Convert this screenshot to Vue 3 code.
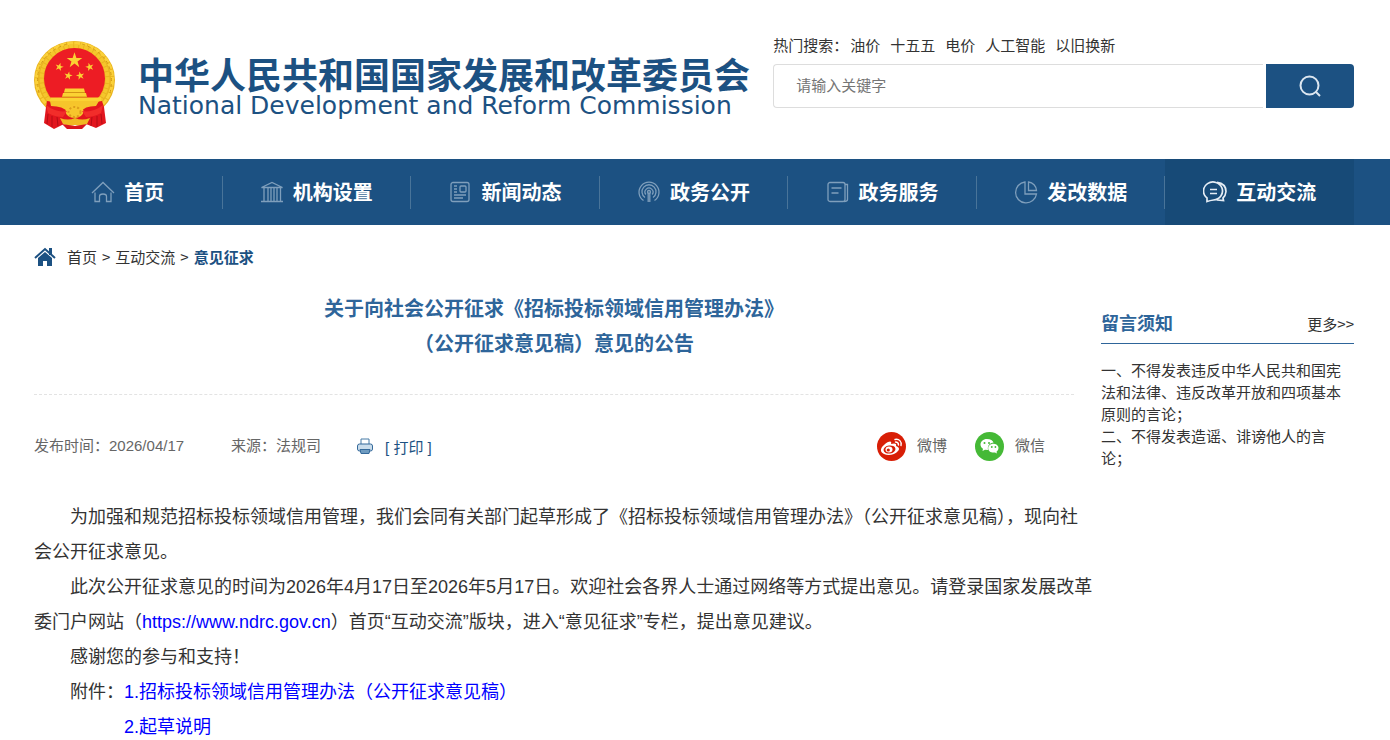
<script setup>
const hotWords = ['油价', '十五五', '电价', '人工智能', '以旧换新']
const navItems = [
  { label: '首页', icon: 'home' },
  { label: '机构设置', icon: 'bank' },
  { label: '新闻动态', icon: 'news' },
  { label: '政务公开', icon: 'signal' },
  { label: '政务服务', icon: 'book' },
  { label: '发改数据', icon: 'pie' },
  { label: '互动交流', icon: 'chat', active: true }
]
const star = 'M0-10 2.3-3.1 9.5-3.1 3.7 1.2 5.9 8.1 0 3.8-5.9 8.1-3.7 1.2-9.5-3.1-2.3-3.1Z'
</script>

<template>
  <div class="page" lang="zh-CN">
    <header class="header wrap">
      <a class="brand" href="#">
        <svg class="emblem" viewBox="0 0 82 89" aria-hidden="true">
          <ellipse cx="40.5" cy="39" rx="40.5" ry="39" fill="#e9b41f" />
          <ellipse cx="40.5" cy="38.5" rx="38" ry="36.5" fill="none" stroke="#fbd13a" stroke-width="3" stroke-dasharray="6 1" />
          <ellipse cx="40.5" cy="38" rx="33" ry="33" fill="none" stroke="#f5c62c" stroke-width="4" stroke-dasharray="4 1" />
          <path d="M5 52Q-3 15 33 3M76 52Q84 15 48 3" fill="none" stroke="#d29a18" stroke-width="1" stroke-dasharray="3 3" />
          <circle cx="40.5" cy="37.5" r="30.500" fill="#ed1c24" />
          <g fill="#fbd233">
            <path :d="star" transform="translate(40.5 19.5) scale(.82)" />
            <path :d="star" transform="translate(25.3 26) rotate(15) scale(.44)" />
            <path :d="star" transform="translate(55.7 26) rotate(-15) scale(.44)" />
            <path :d="star" transform="translate(34.3 34.7) rotate(12) scale(.44)" />
            <path :d="star" transform="translate(46.3 34.7) rotate(-12) scale(.44)" />
            <path d="M31 47.500h19l1 4H30zM29 52h23l1 4H28zM17 56.500h50v6H14z" />
          </g>
          <path d="M30 51.500h21M28 56h25" stroke="#d39515" stroke-width="1" />
          <path d="M13 60 26 62H55L68 60 70 66 72 82 62 87 52 83H30L20 88 10 82 12 66Z" fill="#e2161e" />
          <path d="M16 60h49l-3 5q-12 0-15 6l-6 2-7-2q-5-6-17-6z" fill="#f6c52b" />
          <ellipse cx="40.500" cy="70" rx="9" ry="7" fill="#f7c62c" />
          <ellipse cx="40.500" cy="71" rx="6" ry="5" fill="none" stroke="#dd9c1b" stroke-width="2" stroke-dasharray="2 2" />
          <path d="M26 77q8 3 15 0 7 3 15 0l-3 6q-6 3-12 1-6 2-12-1z" fill="#f0b923" />
          <path d="M12 64q10 8 21 6l-4 6q-8 0-15-4M69 64q-10 8-21 6l4 6q8 0 15-4" fill="#f22d2a" />
          <path d="M14 73l-1 10M18 75l0 11M23 76l1 9M67 73l1 10M63 75l0 11M58 76l-1 9" stroke="#b40d15" stroke-width="1" />
          <path d="M28 83l5 5h15l5-5-12 2z" fill="#d8151d" />
        </svg>
        <span class="brand-text">
          <strong>中华人民共和国国家发展和改革委员会</strong>
          <span>National Development and Reform Commission</span>
        </span>
      </a>
      <form class="search" @submit.prevent>
        <div class="hot">
          <span>热门搜索：</span>
          <a v-for="word in hotWords" :key="word" href="#">{{ word }}</a>
        </div>
        <div class="search-row">
          <input type="text" placeholder="请输入关键字" aria-label="请输入关键字">
          <button type="submit" aria-label="搜索">
            <svg width="22" height="22" viewBox="0 0 22 22" fill="none" stroke="#dce6f0" stroke-width="2">
              <circle cx="10.500" cy="10.500" r="9" />
              <path d="M16.500 16.500 21 21" />
            </svg>
          </button>
        </div>
      </form>
    </header>

    <nav class="nav">
      <ul class="wrap">
        <li v-for="item in navItems" :key="item.icon" :class="{ active: item.active }">
          <a href="#">
            <svg class="nav-icon" viewBox="0 0 24 24" fill="none" stroke="currentColor" stroke-width="1.300" aria-hidden="true">
              <template v-if="item.icon === 'home'">
                <path d="M1 13 12 2.500 23 13M4 12.500V21.500H8.500V16.500Q8.500 14 12 14T15.500 16.500V21.500H20V12.500" />
              </template>
              <template v-else-if="item.icon === 'bank'">
                <path d="M1.500 7.500 12 2.500 22.500 7.500ZM1 21.500H23M4 8V21M8 8V21M11 8V21M14 8V21M17 8V21M20.500 8V21" />
              </template>
              <template v-else-if="item.icon === 'news'">
                <rect x="3" y="2.500" width="18" height="19" rx="2" />
                <rect x="12" y="6" width="6" height="6" rx="1" />
                <path d="M6 6H9M6 9H9M6 12H9M6 15H18M6 18H15" />
              </template>
              <template v-else-if="item.icon === 'signal'">
                <path d="M11.200 12.500V22M12.800 12.500V22M6.500 20.500A10 10 0 1 1 17.500 20.500M8 17.500A7 7 0 1 1 16 17.500M8.800 14.500A4 4 0 1 1 15.200 14.500" />
                <circle cx="12" cy="12" r="1.500" />
              </template>
              <template v-else-if="item.icon === 'book'">
                <rect x="2" y="2.500" width="17" height="19" rx="2" />
                <path d="M5.500 8H15.500M5.500 13H12.500M19 4.500H21.500V19.500Q21.500 21.500 18 21.500" />
              </template>
              <template v-else-if="item.icon === 'pie'">
                <path d="M11 2A10.500 10.500 0 1 0 22.500 14H11ZM14.500 2V10.500H22.500A9 9 0 0 0 14.500 2Z" />
              </template>
              <template v-else>
                <path d="M4 21.500V18A9.500 9 0 1 1 10.500 20Q7 20.500 4 21.500ZM14 2.300Q23 3.500 23 11.500 22.500 16 20 18L20.500 20.500 14 20" stroke-width="1.700" />
                <path d="M7 9.500H14M7 13.500H14" stroke-width="1.700" />
              </template>
            </svg>
            <span>{{ item.label }}</span>
          </a>
        </li>
      </ul>
    </nav>

    <div class="crumbs wrap">
      <svg width="22" height="20" viewBox="0 0 22 20" fill="#1c5182" aria-hidden="true">
        <path d="M15 1h3v7h-3zM4 11 11 5l7 6v8h-5v-5H9v5H4z" />
        <path d="M1 11 11 2l10 9" fill="none" stroke="#1c5182" stroke-width="2" />
      </svg>
      <div class="trail">
        <a href="#">首页</a>
        <span>&gt;</span>
        <a href="#">互动交流</a>
        <span>&gt;</span>
        <a class="current" href="#">意见征求</a>
      </div>
    </div>

    <div class="content wrap">
      <main class="article">
        <div class="article-head">
          <h1>关于向社会公开征求《招标投标领域信用管理办法》<br>（公开征求意见稿）意见的公告</h1>
          <div class="meta">
            <span class="date">发布时间：2026/04/17</span>
            <span class="source">来源：法规司</span>
            <button class="print" type="button">
              <svg width="16" height="16" viewBox="0 0 16 16" aria-hidden="true">
                <path d="M4 6V1h8v5" fill="#fff" stroke="#477ba6" />
                <rect x=".5" y="6" width="15" height="7" rx="2" fill="#c9dceb" stroke="#34699a" />
                <path d="M3 11.500h10l-1 4H4z" fill="#6e9bc0" stroke="#34699a" />
              </svg>
              <span>[ 打印 ]</span>
            </button>
            <div class="share">
              <a href="#">
                <svg viewBox="0 0 29 29" aria-hidden="true">
                  <circle cx="14.500" cy="14.500" r="14.500" fill="#d81e06" />
                  <path d="M11 10c2-1 4-1 3 2 3-1 6-1 5 2 3 1 4 3 2 5-3 4-10 5-14 3-5-2-3-7 0-9 1-1 2-2 4-3z" fill="#fff" />
                  <ellipse cx="12.500" cy="17.500" rx="6" ry="4" fill="#d81e06" transform="rotate(-8 12.500 17.500)" />
                  <ellipse cx="12" cy="17.500" rx="3.500" ry="3" fill="#fff" />
                  <circle cx="11.300" cy="18" r="1.600" fill="#d81e06" />
                  <path d="M18 7.500c4-1 7 2 6 6M18.500 10c2 0 3 1 3 3" fill="none" stroke="#fff" stroke-width="1.400" stroke-linecap="round" />
                </svg>
                <span>微博</span>
              </a>
              <a href="#">
                <svg viewBox="0 0 29 29" aria-hidden="true">
                  <circle cx="14.500" cy="14.500" r="14.500" fill="#45b936" />
                  <path d="M12 7c-4 0-6.500 2.500-6.500 5.500 0 2 1 3.300 2.500 4.300L7.500 19l2.500-1.300 3 .3c-1-5 3-7.500 5.500-7.200C18 8.500 15.500 7 12 7z" fill="#fff" />
                  <path d="M18.500 11.800c-3.500 0-5.300 2.200-5.300 4.500 0 3 3 4.800 6.800 4.200l2 1-.5-1.800c4-3 1.500-7.900-3-7.900z" fill="#fff" />
                  <g fill="#45b936">
                    <circle cx="9.500" cy="11" r="1" /><circle cx="14" cy="11" r="1" />
                    <circle cx="16.800" cy="15" r=".9" /><circle cx="20.400" cy="15" r=".9" />
                  </g>
                </svg>
                <span>微信</span>
              </a>
            </div>
          </div>
        </div>
        <div class="article-body">
          <p>为加强和规范招标投标领域信用管理，我们会同有关部门起草形成了《招标投标领域信用管理办法》（公开征求意见稿），现向社会公开征求意见。</p>
          <p>此次公开征求意见的时间为2026年4月17日至2026年5月17日。欢迎社会各界人士通过网络等方式提出意见。请登录国家发展改革委门户网站（<a href="#">https://www.ndrc.gov.cn</a>）首页“互动交流”版块，进入“意见征求”专栏，提出意见建议。</p>
          <p>感谢您的参与和支持！</p>
          <p>附件：<a href="#">1.招标投标领域信用管理办法（公开征求意见稿）</a></p>
          <p class="second"><a href="#">2.起草说明</a></p>
        </div>
      </main>

      <aside class="notice">
        <div class="notice-head">
          <h2>留言须知</h2>
          <a href="#">更多&gt;&gt;</a>
        </div>
        <p>一、不得发表违反中华人民共和国宪法和法律、违反改革开放和四项基本原则的言论；</p>
        <p>二、不得发表造谣、诽谤他人的言论；</p>
      </aside>
    </div>
  </div>
</template>

<style>
html {
  scrollbar-width: none;
}
</style>

<style scoped>
.page {
  background: #fff;
  color: #333;
  font-family: "Liberation Sans", "Noto Sans CJK SC", sans-serif;
  font-size: 15px;
}
.page * {
  box-sizing: border-box;
}
a {
  color: inherit;
  text-decoration: none;
}
.wrap {
  margin: 0 36px 0 34px;
}
.header {
  display: flex;
  justify-content: space-between;
  gap: 16px;
  height: 159px;
  padding-top: 36px;
}
.brand {
  display: flex;
  flex: none;
  gap: 22px;
  color: #1c5182;
}
.emblem {
  width: 82px;
  height: 89px;
  margin-top: 5px;
}
.brand-text {
  display: flex;
  flex-direction: column;
  padding-top: 19px;
}
.brand-text strong {
  font: bold 36px/36px "Noto Sans CJK SC", sans-serif;
}
.brand-text span {
  font: 25px/30px "DejaVu Sans", sans-serif;
  white-space: nowrap;
}
.search {
  flex: 0 0 44%;
}
.hot {
  display: flex;
  gap: 10px;
  height: 28px;
  line-height: 20px;
}
.hot span {
  margin-right: -8px;
}
.search-row {
  display: flex;
  height: 44px;
}
.search-row input {
  flex: 1;
  min-width: 0;
  padding: 0 22px 2px;
  border: 1px solid #ddd;
  border-right: 0;
  border-radius: 4px 0 0 4px;
  outline: none;
  font: inherit;
  color: #333;
}
.search-row input::placeholder {
  color: #757575;
}
.search-row button {
  display: flex;
  align-items: center;
  justify-content: center;
  width: 88px;
  margin-left: 3px;
  padding: 0;
  border: 0;
  border-radius: 0 4px 4px 0;
  background: #1c5182;
}
.nav {
  background: #1c5182;
}
.nav ul {
  display: flex;
  padding: 0;
  list-style: none;
}
.nav li {
  display: flex;
  flex: 1;
  align-items: center;
  height: 66px;
}
.nav li a {
  display: flex;
  flex: 1;
  align-items: center;
  justify-content: center;
  gap: 9px;
  height: 33px;
  border-right: 1px solid #497499;
  color: #fff;
  font-size: 20px;
  font-weight: bold;
}
.nav li a span {
  padding-bottom: 2px;
}
.nav li.active {
  background: #174a77;
}
.nav li.active a {
  border-right: 0;
}
.nav-icon {
  width: 24px;
  height: 24px;
  color: #7f9fbc;
}
.active .nav-icon {
  color: #e5edf5;
}
.crumbs {
  display: flex;
  align-items: center;
  gap: 11px;
  height: 64px;
  font-family: "Noto Sans CJK SC", sans-serif;
}
.trail {
  display: flex;
  gap: 5px;
  padding-bottom: 2px;
}
.current {
  color: #1c5182;
  font-weight: bold;
}
.content {
  display: flex;
  justify-content: space-between;
}
.article {
  flex: 0 0 1060px;
}
.article-head {
  margin-right: 20px;
}
h1 {
  margin: 0;
  padding: 3px 0 32px;
  border-bottom: 1px dashed #e3e3e3;
  color: #2e659a;
  font-size: 20px;
  line-height: 35px;
  text-align: center;
}
.meta {
  display: flex;
  align-items: center;
  margin-top: 36px;
  height: 30px;
  color: #666;
}
.date,
.source,
.share span {
  padding-bottom: 3px;
}
.source {
  margin-left: 47px;
}
.print {
  display: flex;
  align-items: center;
  gap: 12px;
  margin-left: 36px;
  padding: 0;
  border: 0;
  background: none;
  color: #1c5182;
  font: inherit;
}
.share {
  display: flex;
  gap: 28px;
  margin-left: auto;
  margin-right: 29px;
}
.share a {
  display: flex;
  align-items: center;
  gap: 11px;
}
.share svg {
  width: 29px;
  height: 29px;
}
.article-body {
  margin-top: 39px;
  font-size: 18px;
  line-height: 35px;
}
.article-body p {
  margin: 0;
  text-indent: 2em;
}
.article-body .second {
  text-indent: 5em;
}
.article-body a {
  color: #00f;
}
.notice {
  flex: 0 0 253px;
  padding-top: 22px;
  line-height: 22px;
}
.notice-head {
  display: flex;
  align-items: center;
  justify-content: space-between;
  height: 33px;
  margin-bottom: 16px;
  padding-bottom: 6px;
  border-bottom: 1px solid #2e659a;
}
h2 {
  margin: 0;
  color: #2e659a;
  font-size: 18px;
}
.notice-head a {
  font-family: "Noto Sans CJK SC", sans-serif;
}
.notice p {
  margin: 0;
}
</style>
